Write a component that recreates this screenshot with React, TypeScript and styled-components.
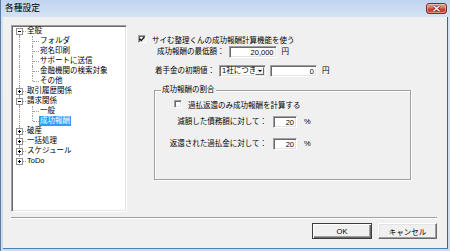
import React from 'react';
import styled, { createGlobalStyle, css } from 'styled-components';

const GlobalStyle = createGlobalStyle`
  html, body {
    margin: 0;
    padding: 0;
    background: #cfdff0;
  }
  body {
    font-family: "Liberation Sans", "Noto Sans CJK JP", sans-serif;
    font-size: 7.5px;
    color: #000;
  }
  * {
    box-sizing: border-box;
  }
`;

const sunken = css`
  border-style: solid;
  border-width: 1px;
  border-color: #a0a0a0 #fff #fff #a0a0a0;
  box-shadow: inset 1px 1px 0 #696969, inset -1px -1px 0 #e3e3e3;
`;

const Window = styled.div`
  width: 450px;
  height: 251px;
  display: flex;
  flex-direction: column;
  background: linear-gradient(#bfd4ee, #d4e3f4 17px, #cddcee);
  border-left: 1px solid #5d7ea3;
`;

const TitleBar = styled.div`
  height: 17px;
  flex: 0 0 auto;
  display: flex;
  align-items: center;
  justify-content: space-between;
  padding: 0 3px 0 4px;
`;

const Title = styled.span`
  font-size: 8.75px;
  line-height: 1;
  color: #000;
`;

const CloseButton = styled.span`
  width: 21px;
  height: 11px;
  display: inline-flex;
  align-items: center;
  justify-content: center;
  border: 1px solid #7b2d24;
  border-radius: 3px;
  background: linear-gradient(#e7a293, #d4705f 45%, #c0412f 55%, #c9563f);
  box-shadow: inset 0 0 0 1px rgba(255, 255, 255, 0.35);
`;

const Client = styled.div`
  flex: 1;
  min-height: 0;
  margin: 0 2px 2px 2px;
  display: flex;
  flex-direction: column;
  padding: 8px 10px 9px 8px;
  background: #f0f0f0;
  border-right: 1px solid #2d6a98;
  border-bottom: 1px solid #3f86bd;
`;

const Main = styled.div`
  flex: 1;
  min-height: 0;
  display: flex;
`;

const Tree = styled.div`
  width: 116px;
  flex: 0 0 auto;
  padding: 0 0 0 1px;
  overflow: hidden;
  background: #fff;
  ${sunken};
`;

type LineKind = 'down' | 'tee' | 'elbow' | 'pipe';

const TreeRow = styled.div`
  height: 10px;
  display: flex;
  align-items: center;
`;

const Cell = styled.span<{ $kind: LineKind }>`
  position: relative;
  flex: 0 0 13px;
  align-self: stretch;

  &::before {
    content: '';
    position: absolute;
    left: 6px;
    top: ${({ $kind }) => ($kind === 'down' ? '5px' : '0')};
    bottom: ${({ $kind }) => ($kind === 'elbow' ? '5px' : '0')};
    border-left: 1px dotted #a0a0a0;
  }

  &::after {
    content: '';
    display: ${({ $kind }) => ($kind === 'pipe' ? 'none' : 'block')};
    position: absolute;
    left: 7px;
    right: 0;
    top: 5px;
    border-top: 1px dotted #a0a0a0;
  }
`;

const Expander = styled.span<{ $open: boolean }>`
  position: absolute;
  z-index: 1;
  left: 3px;
  top: 2px;
  width: 7px;
  height: 7px;
  border: 1px solid #919191;
  background: #fff;

  &::before {
    content: '';
    position: absolute;
    left: 1px;
    top: 2px;
    width: 3px;
    height: 1px;
    background: #000;
  }

  &::after {
    content: '';
    display: ${({ $open }) => ($open ? 'none' : 'block')};
    position: absolute;
    left: 2px;
    top: 1px;
    width: 1px;
    height: 3px;
    background: #000;
  }
`;

const NodeLabel = styled.span<{ $selected?: boolean }>`
  padding: 0 1px;
  line-height: 10px;
  white-space: nowrap;
  background: ${({ $selected }) => ($selected ? '#3399ff' : 'transparent')};
  color: ${({ $selected }) => ($selected ? '#fff' : '#000')};
`;

const Panel = styled.div`
  flex: 1;
  display: flex;
  flex-direction: column;
  align-items: flex-start;
  padding: 9px 0 0 11px;
`;

const CheckRow = styled.div<{ $indent?: number }>`
  height: 10px;
  display: flex;
  align-items: center;
  gap: 6px;
  margin-left: ${({ $indent }) => $indent ?? 0}px;
  white-space: nowrap;
`;

const CheckBox = styled.span`
  width: 8px;
  height: 8px;
  display: inline-flex;
  align-items: center;
  justify-content: center;
  background: #fff;
  ${sunken};
`;

const FieldRow = styled.div<{ $top: number; $indent: number; $gap?: number }>`
  height: 12px;
  display: flex;
  align-items: center;
  gap: ${({ $gap }) => $gap ?? 4}px;
  margin: ${({ $top, $indent }) => `${$top}px 0 0 ${$indent}px`};
  white-space: nowrap;
`;

const Label = styled.span<{ $width?: number }>`
  width: ${({ $width }) => ($width ? `${$width}px` : 'auto')};
  text-align: right;
  line-height: 12px;
`;

const Unit = styled.span`
  margin-left: 1px;
  line-height: 12px;
`;

const Edit = styled.input<{ $w: number }>`
  width: ${({ $w }) => $w}px;
  height: 12px;
  margin: 0;
  padding: 0 2px;
  font: inherit;
  text-align: right;
  color: #000;
  background: #fff;
  outline: none;
  ${sunken};
`;

const Combo = styled.div`
  width: 47px;
  height: 12px;
  display: flex;
  align-items: center;
  padding: 0 1px 0 2px;
  background: #fff;
  ${sunken};
`;

const ComboText = styled.span`
  flex: 1;
  overflow: hidden;
  white-space: nowrap;
  line-height: 10px;
`;

const ComboButton = styled.span`
  width: 9px;
  height: 8px;
  display: inline-flex;
  align-items: center;
  justify-content: center;
  background: #f0f0f0;
  border-style: solid;
  border-width: 1px;
  border-color: #fff #696969 #696969 #fff;

  &::before {
    content: '';
    border-left: 2px solid transparent;
    border-right: 2px solid transparent;
    border-top: 2px solid #000;
  }
`;

const Group = styled.div`
  position: relative;
  width: 257px;
  height: 90px;
  margin: 13px 0 0 16px;
  padding-top: 8px;
  display: flex;
  flex-direction: column;
  align-items: flex-start;
  border: 1px solid #a0a0a0;
  box-shadow: inset 1px 1px 0 #fff, 1px 1px 0 #fff;
`;

const Legend = styled.span`
  position: absolute;
  top: -6px;
  left: 6px;
  padding: 0 1px;
  line-height: 10px;
  background: #f0f0f0;
`;

const Separator = styled.div`
  height: 2px;
  margin-top: 5px;
  border-top: 1px solid #a0a0a0;
  border-bottom: 1px solid #fff;
`;

const Footer = styled.div`
  display: flex;
  justify-content: flex-end;
  gap: 6px;
  margin-top: 4px;
`;

const Button = styled.button<{ $default?: boolean; $w: number }>`
  width: ${({ $w }) => $w}px;
  height: 16px;
  padding: 0;
  font: inherit;
  color: #000;
  background: #f0f0f0;
  border-style: solid;
  border-width: 1px;
  border-color: ${({ $default }) =>
    $default ? '#3c3c3c' : '#fff #696969 #696969 #fff'};
  box-shadow: ${({ $default }) =>
    $default
      ? 'inset 1px 1px 0 #fff, inset -1px -1px 0 #696969, inset -2px -2px 0 #a0a0a0'
      : 'inset -1px -1px 0 #a0a0a0, inset 1px 1px 0 #e3e3e3'};
`;

type Node = {
  label: string;
  open?: boolean;
  selected?: boolean;
  children?: Node[];
};

const tree: Node[] = [
  {
    label: '全般',
    open: true,
    children: [
      { label: 'フォルダ' },
      { label: '宛名印刷' },
      { label: 'サポートに送信' },
      { label: '金融機関の検索対象' },
      { label: 'その他' },
    ],
  },
  { label: '取引履歴関係', children: [] },
  {
    label: '請求関係',
    open: true,
    children: [{ label: '一般' }, { label: '成功報酬', selected: true }],
  },
  { label: '破産', children: [] },
  { label: '一括処理', children: [] },
  { label: 'スケジュール', children: [] },
  { label: 'ToDo', children: [] },
];

function CheckMark() {
  return (
    <svg width="6" height="6" viewBox="0 0 6 6">
      <path d="M0.6 2.8 L2.3 4.6 L5.4 0.9" fill="none" stroke="#000" strokeWidth="1.3" />
    </svg>
  );
}

function TreeView() {
  const rows: React.ReactNode[] = [];
  tree.forEach((node, i) => {
    const last = i === tree.length - 1;
    const rootKind: LineKind = i === 0 ? 'down' : last ? 'elbow' : 'tee';
    rows.push(
      <TreeRow key={node.label}>
        <Cell $kind={rootKind}>
          <Expander $open={!!node.open} />
        </Cell>
        <NodeLabel>{node.label}</NodeLabel>
      </TreeRow>
    );
    if (node.open && node.children) {
      node.children.forEach((child, j) => {
        const lastChild = j === node.children!.length - 1;
        rows.push(
          <TreeRow key={node.label + child.label}>
            <Cell $kind="pipe" />
            <Cell $kind={lastChild ? 'elbow' : 'tee'} />
            <NodeLabel $selected={child.selected}>{child.label}</NodeLabel>
          </TreeRow>
        );
      });
    }
  });
  return <Tree>{rows}</Tree>;
}

export default function App() {
  return (
    <>
      <GlobalStyle />
      <Window>
        <TitleBar>
          <Title>各種設定</Title>
          <CloseButton aria-label="閉じる">
            <svg width="9" height="7" viewBox="0 0 9 7">
              <path d="M1.5 0.8 L7.5 6.2 M7.5 0.8 L1.5 6.2" stroke="#5a1a12" strokeWidth="2.6" />
              <path d="M1.5 0.8 L7.5 6.2 M7.5 0.8 L1.5 6.2" stroke="#fff" strokeWidth="1.5" />
            </svg>
          </CloseButton>
        </TitleBar>
        <Client>
          <Main>
            <TreeView />
            <Panel>
              <CheckRow>
                <CheckBox>
                  <CheckMark />
                </CheckBox>
                サイむ整理くんの成功報酬計算機能を使う
              </CheckRow>
              <FieldRow $top={2} $indent={19}>
                <Label>成功報酬の最低額：</Label>
                <Edit $w={48} readOnly value="20,000" />
                <Unit>円</Unit>
              </FieldRow>
              <FieldRow $top={7} $indent={17}>
                <Label>着手金の初期値：</Label>
                <Combo>
                  <ComboText>1社につき</ComboText>
                  <ComboButton />
                </Combo>
                <Edit $w={47} readOnly value="0" />
                <Unit>円</Unit>
              </FieldRow>
              <Group>
                <Legend>成功報酬の割合</Legend>
                <CheckRow $indent={19}>
                  <CheckBox />
                  過払返還のみ成功報酬を計算する
                </CheckRow>
                <FieldRow $top={7} $indent={0} $gap={6}>
                  <Label $width={112}>減額した債務額に対して：</Label>
                  <Edit $w={24} readOnly value="20" />
                  <Unit>%</Unit>
                </FieldRow>
                <FieldRow $top={10} $indent={0} $gap={6}>
                  <Label $width={112}>返還された過払金に対して：</Label>
                  <Edit $w={24} readOnly value="20" />
                  <Unit>%</Unit>
                </FieldRow>
              </Group>
            </Panel>
          </Main>
          <Separator />
          <Footer>
            <Button $default $w={60}>OK</Button>
            <Button $w={59}>キャンセル</Button>
          </Footer>
        </Client>
      </Window>
    </>
  );
}
